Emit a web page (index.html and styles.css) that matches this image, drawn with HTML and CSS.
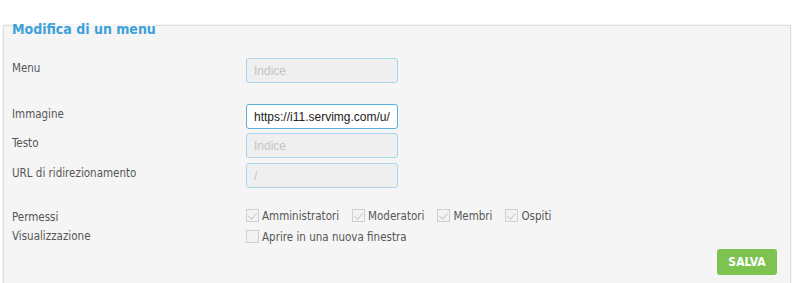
FILE: index.html
```html
<!DOCTYPE html>
<html lang="it">
<head>
    <meta charset="UTF-8">
    <link rel="stylesheet" href="styles.css">
    <title>Modifica di un menu</title>
</head>
<body>
    <fieldset class="panel">
        <legend>Modifica di un menu</legend>

        <div class="row row-menu">
            <label>Menu</label>
            <input class="field" type="text" value="Indice" disabled>
        </div>

        <div class="row row-image">
            <label>Immagine</label>
            <input class="field field-active" type="text" value="https://i11.servimg.com/u/f11/">
        </div>

        <div class="row row-text">
            <label>Testo</label>
            <input class="field" type="text" value="Indice" disabled>
        </div>

        <div class="row row-url">
            <label>URL di ridirezionamento</label>
            <input class="field" type="text" value="/" disabled>
        </div>

        <div class="row row-perms">
            <div class="labels">
                <span>Permessi</span>
                <span>Visualizzazione</span>
            </div>
            <div class="checks">
                <div class="check-line">
                    <span class="check"><span class="box checked"></span>Amministratori</span>
                    <span class="check"><span class="box checked"></span>Moderatori</span>
                    <span class="check"><span class="box checked"></span>Membri</span>
                    <span class="check"><span class="box checked"></span>Ospiti</span>
                </div>
                <div class="check-line">
                    <span class="check"><span class="box"></span>Aprire in una nuova finestra</span>
                </div>
            </div>
        </div>

        <div class="actions">
            <button class="btn-save" type="button">SALVA</button>
        </div>
    </fieldset>
</body>
</html>
```

FILE: styles.css
```css
body {
    margin: 0;
    background-color: #fff;
    font-family: "DejaVu Sans Condensed", "DejaVu Sans", sans-serif;
    font-size: 11.5px;
    color: #555;
}

.panel {
    margin: 13px 9px 0 3px;
    padding: 0 8px 20px;
    border: 1px solid #dedede;
    background-color: #f5f5f5;
    box-shadow: 0 0 2px rgba(0, 0, 0, 0.12);
    min-width: 0;
}

.panel legend {
    padding: 8px 0 0;
    font-size: 14px;
    font-weight: bold;
    color: #3da1d9;
}

.row {
    display: grid;
    grid-template-columns: 234px 152px;
    align-items: start;
}

.row label {
    padding-top: 3px;
}

.row-menu {
    margin-top: 21px;
}

.row-image {
    margin-top: 21px;
}

.row-text {
    margin-top: 4px;
}

.row-url {
    margin-top: 5px;
}

.row-perms {
    margin-top: 19px;
    grid-template-columns: 234px 1fr;
}

.field {
    width: 152px;
    height: 25px;
    box-sizing: border-box;
    margin: 0;
    padding: 0 7px;
    border: 1px solid #aad4ec;
    border-radius: 3px;
    background-color: #efefef;
    font-family: "Liberation Sans", Arial, sans-serif;
    font-size: 12px;
    color: #c4c4c4;
}

.field:disabled {
    color: #c4c4c4;
    -webkit-text-fill-color: #c4c4c4;
}

.field-active {
    background-color: #fff;
    border-color: #5aaee0;
    color: #222;
    outline: none;
}

.labels {
    display: flex;
    flex-direction: column;
    gap: 5px;
    padding-top: 3px;
}

.checks {
    display: flex;
    flex-direction: column;
    gap: 4px;
}

.check-line {
    display: flex;
    gap: 13px;
    font-size: 11.5px;
    height: 17px;
    align-items: center;
}

.check {
    display: inline-flex;
    align-items: center;
    gap: 3px;
}

.box {
    width: 13px;
    height: 13px;
    box-sizing: border-box;
    border: 1px solid #cfcfcf;
    background-color: #f2f2f2;
    position: relative;
}

.box.checked::after {
    content: "";
    position: absolute;
    left: 3px;
    top: 1px;
    width: 4px;
    height: 7px;
    border: solid #c9c9c9;
    border-width: 0 1px 1px 0;
    transform: rotate(40deg);
}

.actions {
    display: flex;
    justify-content: flex-end;
    margin-top: 4px;
    padding-right: 5px;
}

.btn-save {
    width: 60px;
    height: 26px;
    border: none;
    border-radius: 3px;
    background-color: #7cc350;
    color: #fff;
    font-family: "DejaVu Sans Condensed", "DejaVu Sans", sans-serif;
    font-size: 12px;
    font-weight: bold;
    cursor: pointer;
}
```
